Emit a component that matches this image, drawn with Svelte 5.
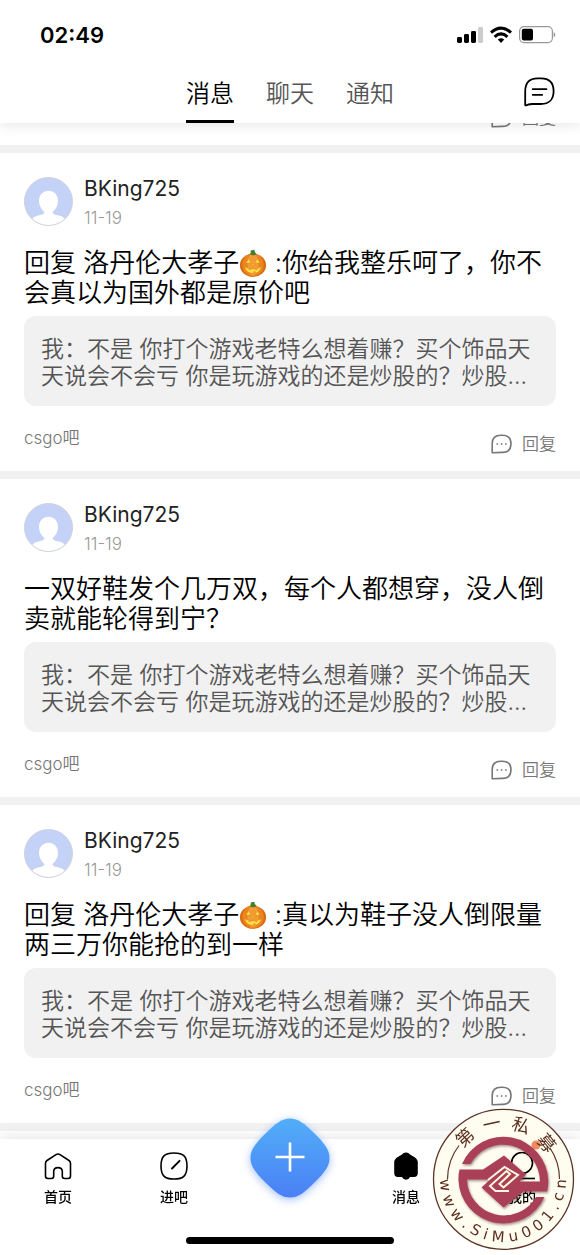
<script>
  const quote = '我：不是 你打个游戏老特么想着赚？买个饰品天天说会不会亏 你是玩游戏的还是炒股的？炒股…';
  const posts = [
    { id: 1, pre: '回复 洛丹伦大孝子', pumpkin: true, text: ' :你给我整乐呵了，你不会真以为国外都是原价吧' },
    { id: 2, pre: '', pumpkin: false, text: '一双好鞋发个几万双，每个人都想穿，没人倒卖就能轮得到宁？' },
    { id: 3, pre: '回复 洛丹伦大孝子', pumpkin: true, text: ' :真以为鞋子没人倒限量两三万你能抢的到一样' }
  ];
  const tabs = ['消息', '聊天', '通知'];
  let active = $state('消息');

  // Glyph placement round the rim of the stamp: lists for the x, y and rotate attributes.
  const centre = 72;
  function rim(widths, angles, radius, side) {
    const xs = [], ys = [], rot = [];
    widths.forEach((w, i) => {
      const a = (angles[i] * Math.PI) / 180;
      const px = centre + radius * Math.sin(a);
      const py = centre - side * radius * Math.cos(a);
      xs.push((px - (w / 2) * Math.cos(a)).toFixed(1));
      ys.push((py - side * (w / 2) * Math.sin(a)).toFixed(1));
      rot.push((side * angles[i]).toFixed(1));
    });
    return { x: xs.join(' '), y: ys.join(' '), rotate: rot.join(' ') };
  }
  const top = rim([17, 17, 17, 17], [-43, -12, 18, 50], 50, 1);

  const em = [0.818, 0.818, 0.818, 0.318, 0.635, 0.278, 0.863, 0.634, 0.636, 0.636, 0.636, 0.318, 0.55, 0.634];
  const widths = em.map((e) => e * 15);
  const total = widths.reduce((s, w) => s + w + 5, -5);
  let run = -total / 2;
  const angles = widths.map((w) => {
    const mid = run + w / 2;
    run += w + 5;
    return (mid / 62) * (180 / Math.PI);
  });
  const low = rim(widths, angles, 63, -1);
</script>

{#snippet replyButton()}
  <button class="reply">
    <svg width="22" height="20" viewBox="0 0 22 20" fill="none" stroke="#777" stroke-width="1.6" stroke-linejoin="round">
      <path d="M1.200 18.800V9.500C1.200 4 4.500 1.200 10 1.200H11C17 1.200 20 4 20 9.600S17 18.400 11.500 18.400Q6 18.400 1.200 18.800Z" />
      <path d="M5.500 10h1.600M9.800 10h1.600M14.100 10H15.700" />
    </svg>
    回复
  </button>
{/snippet}

<div class="screen">
  <header>
    <div class="status">
      <span class="time">02:49</span>
      <svg width="100" height="20" viewBox="0 0 100 20">
        <g>
          <rect x="1" y="12" width="5" height="6" rx="1.4" />
          <rect x="8" y="9" width="5" height="9" rx="1.4" />
          <rect x="15" y="6" width="5" height="12" rx="1.4" />
          <rect x="22" y="2" width="5" height="16" rx="1.4" fill="#ccc" />
        </g>
        <g fill="none" stroke="#000" stroke-width="3">
          <path d="M35 7.600Q45 -1.400 55 7.600" />
          <path d="M38.600 11.800Q45 6 51.400 11.800" />
        </g>
        <path d="M41.800 14.600Q45 11.800 48.200 14.600L45 18Z" />
        <rect x="63.600" y="1.600" width="32.800" height="16" rx="4.500" fill="none" stroke="#999" stroke-width="1.200" />
        <rect x="65.800" y="3.800" width="11.200" height="11.600" rx="2" />
        <path d="M97.600 7v5.600Q99.400 11.600 99.400 9.800T97.600 7Z" fill="#999" />
      </svg>
    </div>
    <div class="bar">
      <nav class="tabs">
        {#each tabs as t}
          <button class:active={active === t} onclick={() => (active = t)}>{t}</button>
        {/each}
      </nav>
      <button class="compose" aria-label="聊天">
        <svg width="32" height="30" viewBox="0 0 32 30" fill="none" stroke="#000" stroke-width="1.8" stroke-linecap="round" stroke-linejoin="round">
          <path d="M1.200 28V14.500C1.200 5.500 5.500 1.400 13.500 1.400H17C25 1.400 29.600 6 29.600 14.200S25 27 17 27H8Q4 27.200 2 28.400Q1.200 28.600 1.200 28Z" />
          <path d="M8.700 12.200H22.400M8.700 17.800H18.200" />
        </svg>
      </button>
    </div>
  </header>

  <main>
    <article class="tail">
      <footer>{@render replyButton()}</footer>
    </article>
    {#each posts as p (p.id)}
      <article>
        <div class="user">
          <svg width="49" height="49" viewBox="0 0 49 49">
            <circle cx="24.500" cy="24.500" r="24" fill="#c3d2f6" />
            <path d="M24.500 13.800C30 13.800 34 18 34 24C34 28.500 32 32 28.500 35.200Q29 37.500 33 38Q39 39 41 42A24 24 0 0 1 8 42Q10 39 16 38Q20 37.500 20.500 35.200C17 32 15 28.500 15 24C15 18 19 13.800 24.500 13.800Z" fill="#fff" />
            <circle cx="24.500" cy="24.500" r="24" fill="none" stroke="#cdd1dc" />
          </svg>
          <div>
            <div class="name">BKing725</div>
            <div class="date">11-19</div>
          </div>
        </div>
        <p class="title">{p.pre}{#if p.pumpkin}<svg class="pumpkin" width="28" height="28" viewBox="0 0 30 29" preserveAspectRatio="none" role="img" aria-label="南瓜">
              <ellipse cx="15" cy="16.800" rx="14" ry="12" fill="#d96b12" />
              <ellipse cx="15" cy="16.500" rx="11.500" ry="12" fill="#ea8420" />
              <ellipse cx="15" cy="16" rx="6" ry="11.500" fill="#f29a33" />
              <path d="M11.500 5.500Q13 4.500 12.500 1.500L16.500 .8Q16.500 4 19 5.500Q15 7.500 11.500 5.500Z" fill="#477c2c" />
              <path d="M7.500 14.500L10.500 10L12.500 14.500ZM22.500 14.500L19.500 10L17.500 14.500ZM15 14.500L16.200 17H13.800ZM6 18.500Q8 20 10.500 20V21.500H12.500V20.500Q15 21 17.500 20.500V21.500H19.500V20Q22 20 24 18.500Q22.500 24 17.500 25V23.500H15.500V25.300Q7.500 25 6 18.500Z" fill="#ffe04a" stroke="#e0881a" stroke-width=".4" />
            </svg>{/if}{p.text}</p>
        <p class="quote">{quote}</p>
        <footer><a href="#bar">csgo吧</a>{@render replyButton()}</footer>
      </article>
    {/each}
  </main>

  <nav class="dock">
    <div class="items">
      <a href="#home">
        <svg width="28" height="28" viewBox="0 0 28 28" fill="none" stroke="#000" stroke-width="1.600" stroke-linejoin="round">
          <path d="M1.500 11.500Q1.500 9.500 3 8.500L12 2.600Q14 1.300 16 2.600L25 8.500Q26.500 9.500 26.500 11.500V24Q26.500 26.500 24 26.500H20.500Q18.300 26.500 18.300 24.300V19.500Q18.300 15.600 14 15.600T9.700 19.500V24.300Q9.700 26.500 7.500 26.500H4Q1.500 26.500 1.500 24Z" />
        </svg>
        首页
      </a>
      <a href="#enter">
        <svg width="28" height="28" viewBox="0 0 28 28" fill="none" stroke="#000" stroke-width="1.600" stroke-linecap="round">
          <path d="M14 1C23.500 1 27 4.500 27 14S23.500 27 14 27 1 23.500 1 14 4.500 1 14 1Z" />
          <path d="M12 16.500L19.500 8.800" stroke-width="1.900" />
        </svg>
        进吧
      </a>
      <button class="add" aria-label="发布">
        <svg width="80" height="80" viewBox="0 0 80 80">
          <defs>
            <linearGradient id="blue" x1="0" y1="0" x2="0" y2="1">
              <stop offset="0" stop-color="#52aef8" />
              <stop offset="1" stop-color="#4a80f5" />
            </linearGradient>
          </defs>
          <path d="M40 .5C48 .5 54 5 65 16C75 26 79.500 32 79.500 40S75 54 65 64C54 75 48 79.500 40 79.500S26 75 15 64C5 54 .5 48 .5 40S5 26 15 16C26 5 32 .5 40 .5Z" fill="url(#blue)" />
          <path d="M40 24.500V53.500M25.500 39H54.500" stroke="#fff" stroke-width="2.600" />
        </svg>
      </button>
      <a href="#message">
        <svg width="28" height="28" viewBox="0 0 28 28">
          <path d="M14 .4C15.800 .4 17 1.200 18 2.500C20 3.700 25.800 6.200 25.800 10V21Q25.800 25 22 25H18Q16.800 27.800 14 27.800T10 25H6Q2.200 25 2.200 21V10C2.200 6.200 8 3.700 10 2.500C11 1.200 12.200 .4 14 .4Z" />
        </svg>
        消息
      </a>
      <a href="#me">
        <svg width="28" height="28" viewBox="0 0 28 28" fill="none" stroke="#000" stroke-width="1.600">
          <circle cx="14" cy="11" r="10.500" />
          <path d="M1 26.500H27" />
        </svg>
        我的
      </a>
    </div>
    <div class="home"></div>

    <svg class="stamp" width="144" height="144" viewBox="0 0 144 144">
      <defs>
        <filter id="shade" x="-10%" y="-10%" width="120%" height="120%">
          <feDropShadow dx="1" dy="1.500" stdDeviation="1" flood-color="#402020" flood-opacity=".5" />
        </filter>
      </defs>
      <circle class="tint" cx="72" cy="73" r="42" fill="#fffdf0" />
      <path fill="#fffdf0" fill-rule="evenodd" d="M72.500 2A70.300 70.300 0 0 1 72.500 142.600A70.300 70.300 0 0 1 72.500 2ZM72.500 33A40 40 0 0 0 72.500 113A40 40 0 0 0 72.500 33Z" />
      <circle cx="72.500" cy="72.300" r="70" fill="none" stroke="#5b3528" stroke-width="1.300" />
      <path d="M16.500 72A56 56 0 0 1 28 38.500M128.500 72A56 56 0 0 0 119 41" fill="none" stroke="#5b3528" stroke-width="1.200" />
      <circle cx="105" cy="38" r="4.500" fill="#f58a60" />
      <g fill="#a94058" filter="url(#shade)">
        <path d="M31 57A45 45 0 0 1 117.300 73.500Q117.300 80 116 84.500H92.500L72.500 100.500L50.500 80.500L59 72.500H36A37 37 0 0 0 105 90H113.500A45 45 0 0 1 27.500 73.500Q27.300 67 28.500 62.500H52L73 48.500L95 67.500L88.500 74.500H109A37 37 0 0 0 39.500 57Z" />
      </g>
      <path d="M79 85L65.500 85L60 80L76.500 65L80 68L69.500 78L73.500 81.500L88 69L74.500 61L58 74" transform="translate(-1 -1)" fill="none" stroke="#fff8dc" stroke-width="2" />
      <text class="cn" x={top.x} y={top.y} rotate={top.rotate}>第一私募</text>
      <text class="url" x={low.x} y={low.y} rotate={low.rotate}>www.SiMu001.cn</text>
    </svg>
  </nav>
</div>

<style>
  :global(body) { margin: 0; background: #fff; }
  .screen { height: 100vh; display: flex; flex-direction: column; background: #fff; font-family: Inter, "Noto Sans CJK SC", sans-serif; font-weight: 350; color: #111; overflow: hidden; }
  button { border: 0; background: none; padding: 0; font: inherit; color: inherit; cursor: pointer; }
  a { color: inherit; text-decoration: none; }
  svg { display: block; flex: none; }
  p { margin: 0; }
  header { position: relative; z-index: 1; flex: none; background: #fff; box-shadow: 0 2px 12px rgba(0, 0, 0, .1); }
  .status { display: flex; justify-content: space-between; align-items: center; height: 52px; padding: 18px 24px 0 40px; box-sizing: border-box; }
  .time { font-size: 22px; font-weight: 600; color: #000; }
  .bar { display: grid; grid-template-columns: 1fr auto 1fr; height: 71px; padding: 0 24px; }
  .tabs { grid-column: 2; display: flex; gap: 32px; }
  .tabs button { font-size: 24px; color: #555; border-bottom: 3px solid transparent; padding-top: 10px; }
  .tabs .active { color: #000; border-color: #000; }
  .compose { justify-self: end; padding-top: 8px; }
  main { flex: 1; min-height: 0; overflow: hidden; }
  article { padding: 24px 24px 15px; border-bottom: 8px solid #f1f1f1; }
  .tail { display: flex; flex-direction: column; justify-content: flex-end; height: 7px; padding-top: 0; }
  .tail footer { justify-content: flex-end; }
  .user { display: flex; gap: 11px; height: 49px; }
  .name { font-size: 21px; line-height: 24px; color: #222; font-weight: 400; }
  .date { font-size: 17px; line-height: 24px; margin-top: 5px; color: #999; }
  .title { margin-top: 22px; font-size: 26px; line-height: 30px; color: #000; }
  .pumpkin { display: inline-block; vertical-align: -5px; }
  .quote { margin-top: 8px; padding: 20px 17px 16px; border-radius: 12px; background: #f1f1f1; color: #555; font-size: 23px; line-height: 27px; }
  footer { display: flex; justify-content: space-between; margin-top: 20px; font-size: 17px; line-height: 24px; color: #777; }
  .reply { display: flex; align-items: center; gap: 9px; margin-top: 6px; }
  .dock { position: relative; z-index: 1; flex: none; background: #fff; box-shadow: 0 -2px 12px rgba(0, 0, 0, .1); padding-bottom: 11px; }
  .items { display: grid; grid-template-columns: repeat(5, 1fr); height: 98px; }
  .items a { display: flex; flex-direction: column; align-items: center; gap: 7px; padding-top: 13px; font-size: 14px; line-height: 20px; font-weight: 500; color: #000; }
  .add { align-self: start; justify-self: center; margin-top: -21px; filter: drop-shadow(0 2px 4px rgba(74, 128, 245, .5)); }
  .home { width: 208px; height: 7px; border-radius: 4px; background: #000; margin: 0 auto; }
  .stamp { position: absolute; right: 5px; bottom: 4px; }
  .tint { mix-blend-mode: multiply; }
  .stamp text { fill: #5b3020; font-weight: 400; }
  .cn { font-size: 18px; }
  .url { font-family: "DejaVu Sans", sans-serif; font-size: 15px; }
</style>
